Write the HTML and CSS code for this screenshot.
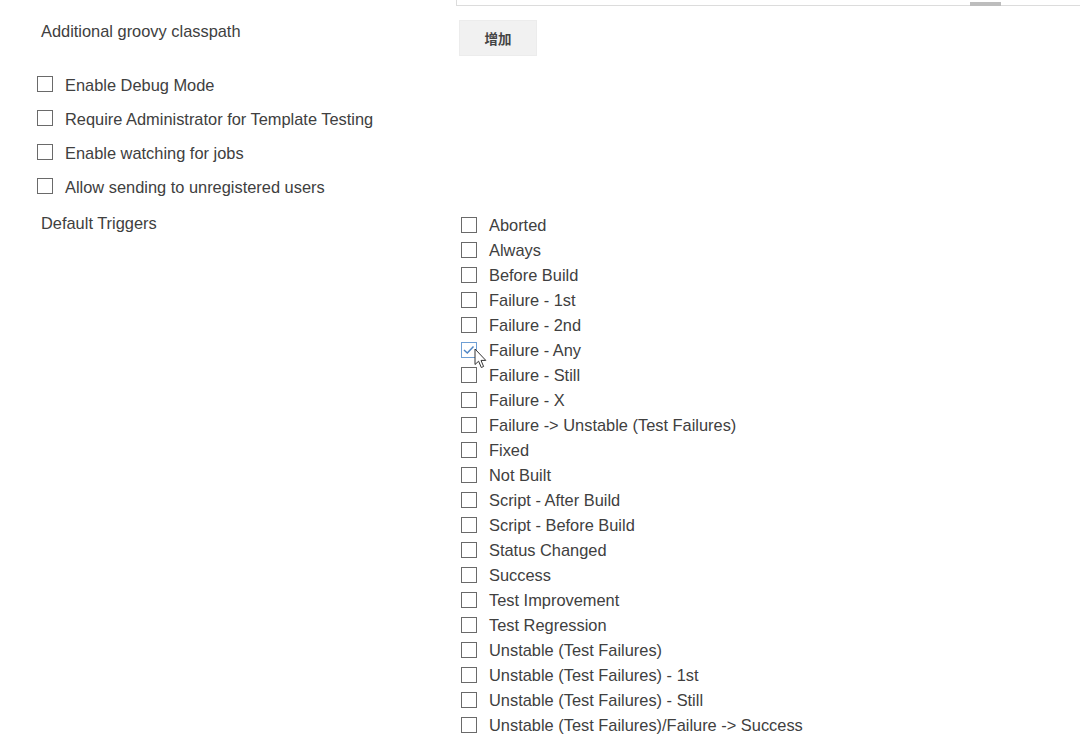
FILE: index.html
```html
<!DOCTYPE html>
<html>
<head>
<meta charset="utf-8">
<link rel="stylesheet" href="styles.css">
</head>
<body>
<div class="page">
  <div class="grid">
    <div></div>
    <div class="textarea-tail"><span class="thumb"></span></div>

    <div class="label first">Additional groovy classpath</div>
    <div class="cell"><button class="btn">增加</button></div>
  </div>

  <div class="opts">
    <label class="opt"><span class="cb"></span>Enable Debug Mode</label>
    <label class="opt"><span class="cb"></span>Require Administrator for Template Testing</label>
    <label class="opt"><span class="cb"></span>Enable watching for jobs</label>
    <label class="opt"><span class="cb"></span>Allow sending to unregistered users</label>
  </div>

  <div class="grid triggers">
    <div class="label second">Default Triggers</div>
    <ul class="list">
      <li><span class="cb"></span>Aborted</li>
      <li><span class="cb"></span>Always</li>
      <li><span class="cb"></span>Before Build</li>
      <li><span class="cb"></span>Failure - 1st</li>
      <li><span class="cb"></span>Failure - 2nd</li>
      <li class="checked-row"><span class="cb checked"><svg viewBox="0 0 16 16" width="16" height="16"><path d="M3 8 L6.3 11 L12.5 4.5" fill="none" stroke="#4f86c6" stroke-width="1.5"/></svg></span>Failure - Any<svg class="cursor" viewBox="0 0 13 21" width="13" height="21"><path d="M1 1 L1 16.5 L4.6 13.2 L7.3 19.5 L9.6 18.5 L7 12.4 L11.8 12.4 Z" fill="#fff" stroke="#333" stroke-width="1" stroke-linejoin="round"/></svg></li>
      <li><span class="cb"></span>Failure - Still</li>
      <li><span class="cb"></span>Failure - X</li>
      <li><span class="cb"></span>Failure -&gt; Unstable (Test Failures)</li>
      <li><span class="cb"></span>Fixed</li>
      <li><span class="cb"></span>Not Built</li>
      <li><span class="cb"></span>Script - After Build</li>
      <li><span class="cb"></span>Script - Before Build</li>
      <li><span class="cb"></span>Status Changed</li>
      <li><span class="cb"></span>Success</li>
      <li><span class="cb"></span>Test Improvement</li>
      <li><span class="cb"></span>Test Regression</li>
      <li><span class="cb"></span>Unstable (Test Failures)</li>
      <li><span class="cb"></span>Unstable (Test Failures) - 1st</li>
      <li><span class="cb"></span>Unstable (Test Failures) - Still</li>
      <li><span class="cb"></span>Unstable (Test Failures)/Failure -&gt; Success</li>
    </ul>
  </div>
</div>
</body>
</html>
```

FILE: styles.css
```css
html, body {
  margin: 0;
  padding: 0;
  background: #fff;
}
body {
  font-family: "Liberation Sans", Arial, sans-serif;
  font-size: 16.4px;
  color: #404040;
  width: 1080px;
  height: 756px;
  overflow: hidden;
}
.grid {
  display: grid;
  grid-template-columns: 456px 1fr;
}
.textarea-tail {
  height: 5px;
  border-left: 1px solid #dcdcdc;
  border-bottom: 1px solid #dcdcdc;
  display: flex;
  justify-content: flex-end;
  padding-right: 79px;
}
.thumb {
  display: block;
  width: 31px;
  height: 4px;
  margin-top: 2px;
  background: #bdbdbd;
}
.label {
  padding-left: 41px;
  line-height: 20px;
}
.label.first {
  padding-top: 15px;
}
.cell {
  padding-top: 14px;
  padding-left: 3px;
}
.btn {
  width: 78px;
  height: 36px;
  border: 1px solid #ececec;
  background: #f1f1f1;
  color: #444;
  font-family: "Noto Sans CJK SC", sans-serif;
  font-size: 13.5px;
  font-weight: bold;
  padding: 0;
}
.opts {
  margin-top: 12px;
  display: flex;
  flex-direction: column;
}
.opt {
  display: flex;
  align-items: center;
  height: 34px;
  padding-left: 37px;
}
.cb {
  display: inline-block;
  box-sizing: border-box;
  width: 16px;
  height: 16px;
  border: 1px solid #6a6a6a;
  background: #fff;
  margin-right: 12px;
  flex: none;
  position: relative;
  top: -1px;
}
.cb.checked {
  border-color: #6f9fd4;
}
.cb.checked svg {
  position: absolute;
  left: -1px;
  top: -1px;
}
.label.second {
  padding-top: 9px;
}
.list {
  list-style: none;
  margin: 0;
  padding: 9px 0 0 5px;
}
.list li {
  display: flex;
  align-items: center;
  height: 25px;
  position: relative;
}
.cursor {
  position: absolute;
  left: 13px;
  top: 10px;
}
```
